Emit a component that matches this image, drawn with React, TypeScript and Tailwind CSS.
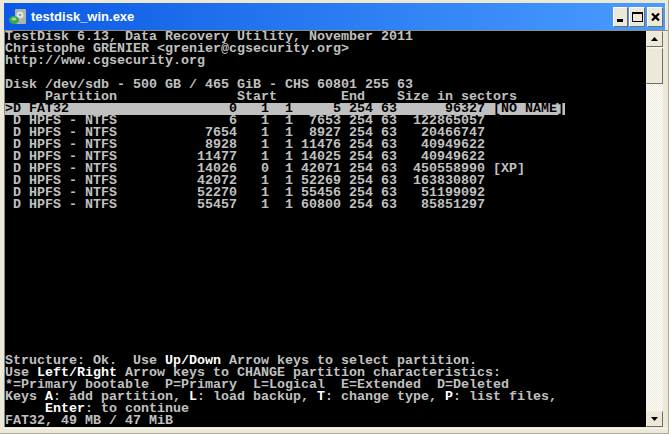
const rows = [
  'TestDisk 6.13, Data Recovery Utility, November 2011',
  'Christophe GRENIER <grenier@cgsecurity.org>',
  'http://www.cgsecurity.org',
  '',
  'Disk /dev/sdb - 500 GB / 465 GiB - CHS 60801 255 63',
  '     Partition               Start        End    Size in sectors',
];

const partitions = [
  ' D HPFS - NTFS              6   1  1  7653 254 63  122865057',
  ' D HPFS - NTFS           7654   1  1  8927 254 63   20466747',
  ' D HPFS - NTFS           8928   1  1 11476 254 63   40949622',
  ' D HPFS - NTFS          11477   1  1 14025 254 63   40949622',
  ' D HPFS - NTFS          14026   0  1 42071 254 63  450558990 [XP]',
  ' D HPFS - NTFS          42072   1  1 52269 254 63  163830807',
  ' D HPFS - NTFS          52270   1  1 55456 254 63   51199092',
  ' D HPFS - NTFS          55457   1  1 60800 254 63   85851297',
];

function B({ children }: { children: string }) {
  return <span className="text-white">{children}</span>;
}

function CaptionButton({ children, wide }: { children: React.ReactNode; wide?: boolean }) {
  return (
    <div
      className={`flex h-[20px] items-center justify-center border border-b-[#716f64] border-l-white border-r-[#716f64] border-t-white bg-[#ece9d8] ${
        wide ? 'w-[16px]' : 'w-[15px]'
      }`}
    >
      {children}
    </div>
  );
}

function ScrollButton({ up }: { up?: boolean }) {
  return (
    <div className="flex h-[16px] w-[17px] shrink-0 items-center justify-center border border-b-[#716f64] border-l-[#f1efe2] border-r-[#716f64] border-t-[#f1efe2] bg-[#ece9d8]">
      <svg width="7" height="4" viewBox="0 0 7 4">
        <path d={up ? 'M3.5 0 L7 4 L0 4 Z' : 'M0 0 L7 0 L3.5 4 Z'} fill="#000" />
      </svg>
    </div>
  );
}

export default function App() {
  return (
    <div className="flex h-[434px] w-[669px] flex-col overflow-hidden border-r border-b border-[#aca899] bg-[#ece9d8] pt-[3px] pl-[4px]">
      <div className="mr-[3px] flex h-[27px] shrink-0 items-center bg-gradient-to-r from-[#0a58e4] to-[#4a9cff] pl-[5px] pr-[2px]">
        <svg width="18" height="16" viewBox="0 0 18 16" className="mr-[4px] shrink-0">
          <rect x="6" y="0" width="11" height="15" rx="1" fill="#aeb3ae" />
          <circle cx="11" cy="6" r="3.5" fill="#dfe2df" />
          <circle cx="11" cy="6" r="1" fill="#7f857f" />
          <ellipse cx="5" cy="11" rx="5" ry="4" fill="#38a848" />
          <ellipse cx="5" cy="10" rx="2.5" ry="1.5" fill="#9bdc9b" />
        </svg>
        <span className="flex-1 font-['Liberation_Sans',sans-serif] text-[13px] font-bold text-white">testdisk_win.exe</span>
        <CaptionButton>
          <div className="mt-[8px] mr-[2px] h-[3px] w-[6px] bg-black" />
        </CaptionButton>
        <div className="ml-[1px]">
          <CaptionButton wide>
            <div className="h-[10px] w-[11px] border border-t-2 border-black" />
          </CaptionButton>
        </div>
        <div className="ml-[2px]">
          <CaptionButton wide>
            <svg width="9" height="8" viewBox="0 0 9 8">
              <path d="M1 0.5 L8 7.5 M8 0.5 L1 7.5" stroke="#000" strokeWidth="2.2" />
            </svg>
          </CaptionButton>
        </div>
      </div>
      <div className="flex h-[397px] shrink-0 border-t border-l border-[#8f8d80]">
        <div className="h-full w-[641px] overflow-hidden bg-black font-['Liberation_Mono',monospace] text-[13.33px] leading-[12px] font-bold whitespace-pre text-[#c0c0c0]">
          {rows.map((row, i) => (
            <div key={i} className="h-[12px]">{row}</div>
          ))}
          <div className="h-[12px] w-[560px] bg-[#c0c0c0] text-black">{'>D FAT32                    0   1  1     5 254 63      96327 [NO NAME]'}</div>
          {partitions.map((row) => (
            <div key={row} className="h-[12px]">{row}</div>
          ))}
          <div className="h-[144px]" />
          <div className="h-[12px]">Structure: Ok.  Use <B>Up/Down</B> Arrow keys to select partition.</div>
          <div className="h-[12px]">Use <B>Left/Right</B> Arrow keys to CHANGE partition characteristics:</div>
          <div className="h-[12px]">*=Primary bootable  P=Primary  L=Logical  E=Extended  D=Deleted</div>
          <div className="h-[12px]">Keys <B>A</B>: add partition, <B>L</B>: load backup, <B>T</B>: change type, <B>P</B>: list files,</div>
          <div className="h-[12px]">     <B>Enter</B>: to continue</div>
          <div className="h-[12px]">FAT32, 49 MB / 47 MiB</div>
        </div>
        <div className="flex w-[17px] flex-col bg-[repeating-conic-gradient(#ece9d8_0_25%,#ffffff_0_50%)] bg-[length:2px_2px]">
          <ScrollButton up />
          <div className="mt-[1px] h-[36px] shrink-0 border border-b-[#716f64] border-l-[#f1efe2] border-r-[#716f64] border-t-[#f1efe2] bg-[#ece9d8]" />
          <div className="flex-1" />
          <ScrollButton />
        </div>
      </div>
      <div className="mt-[1px] h-[1px] bg-[#f8f7f0]" />
    </div>
  );
}
